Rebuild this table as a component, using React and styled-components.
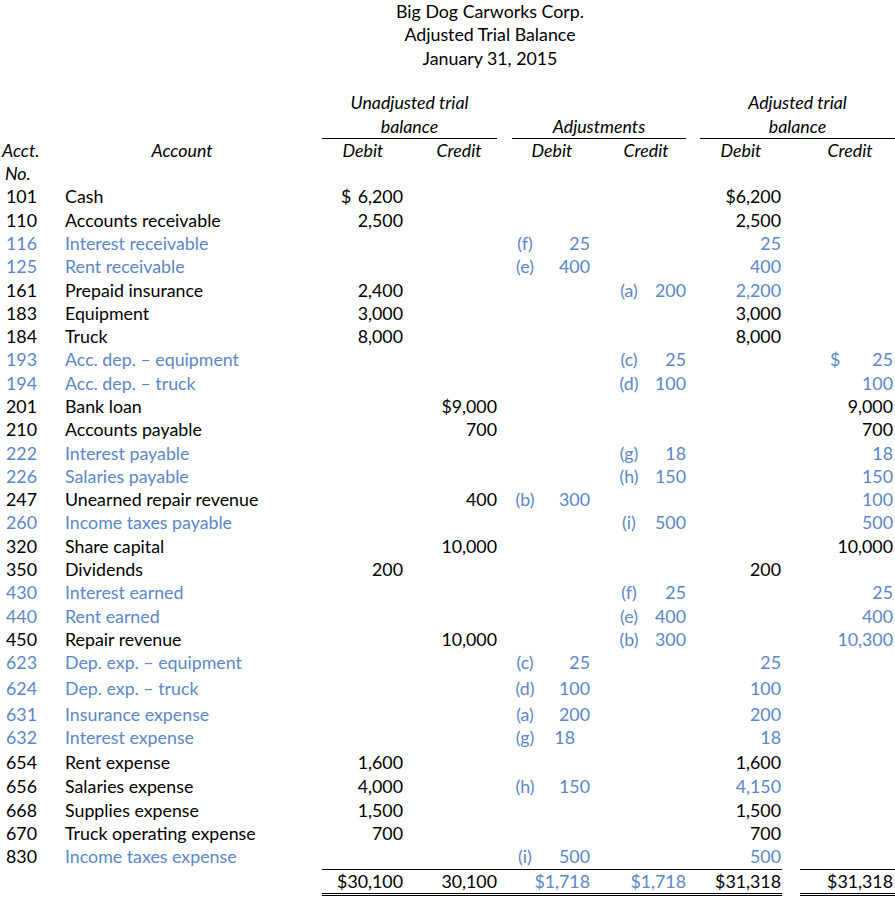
import React from "react";
import styled, { createGlobalStyle } from "styled-components";

// colours and grid columns shared by every row of the sheet
const BLUE = "#5b87c6";
const INK = "#000";
const COLS = "60px 262px 88px 87px 15px 87px 87px 14px 90px 105px";

const GlobalStyle = createGlobalStyle`
  html, body {
    margin: 0;
    padding: 0;
    background: #fff;
  }
  body {
    font-family: Lato, "Open Sans", sans-serif;
    font-size: 17.8px;
    line-height: 23.3px;
    color: ${INK};
  }
`;

const Sheet = styled.div`
  width: 895px;
  height: 897px;
  overflow: hidden;
`;

const Title = styled.header`
  padding-left: 85px;
  text-align: center;
`;

const TitleLine = styled.div`
  height: 23.3px;
`;

const GroupBar = styled.div`
  display: grid;
  grid-template-columns: ${COLS};
  margin-top: 21.45px;
`;

const Group = styled.div`
  grid-column: ${(p) => p.$col};
  min-height: 46.6px;
  display: flex;
  flex-direction: column;
  justify-content: flex-end;
  align-items: center;
  font-style: italic;
  border-bottom: 1px solid ${INK};
`;

const LabelRow = styled.div`
  display: grid;
  grid-template-columns: ${COLS};
  height: 46.4px;
  font-style: italic;
`;

const AcctHead = styled.div`
  grid-column: 1;
  display: flex;
  flex-direction: column;
`;

const AcctHeadLine = styled.span`
  padding-left: ${(p) => p.$pl}px;
  height: 23.2px;
`;

const HeadLabel = styled.div`
  grid-column: ${(p) => p.$col};
  text-align: center;
  padding-left: ${(p) => p.$pl || 0}px;
  padding-right: ${(p) => p.$pr || 0}px;
`;

const Row = styled.div`
  display: grid;
  grid-template-columns: ${COLS};
  height: ${(p) => p.$h}px;
  white-space: nowrap;
`;

const Num = styled.div`
  grid-column: 1;
  padding-left: 6px;
  color: ${(p) => (p.$blue ? BLUE : INK)};
`;

const Name = styled.div`
  grid-column: 2;
  padding-left: 5px;
  color: ${(p) => (p.$blue ? BLUE : INK)};
`;

const Amount = styled.div`
  grid-column: ${(p) => p.$col};
  display: flex;
  justify-content: ${(p) => (p.$split ? "space-between" : "flex-end")};
  padding-left: ${(p) => p.$pl || 0}px;
  padding-right: ${(p) => p.$pr || 0}px;
  color: ${(p) => (p.$blue ? BLUE : INK)};
`;

const Adj = styled.div`
  grid-column: ${(p) => p.$col};
  display: flex;
  padding-left: ${(p) => p.$pl}px;
  padding-right: ${(p) => p.$pr}px;
  color: ${BLUE};
`;

const Letter = styled.span`
  width: 26px;
  text-align: center;
`;

const AdjAmount = styled.span`
  flex: 1;
  text-align: right;
  padding-right: ${(p) => p.$shift || 0}px;
`;

const TotalRow = styled.div`
  display: grid;
  grid-template-columns: ${COLS};
  white-space: nowrap;
`;

const TotalCell = styled.div`
  grid-column: ${(p) => p.$col};
  height: 23.3px;
  border-top: 1px solid ${INK};
  border-bottom: 3px double ${INK};
  margin-left: ${(p) => p.$ml || 0}px;
  margin-right: ${(p) => p.$mr || 0}px;
  padding-right: ${(p) => p.$pr || 0}px;
  text-align: right;
  color: ${(p) => (p.$blue ? BLUE : INK)};
`;

const rows = [
  { no: "101", name: "Cash", ud: "$ 6,200", jd: "$6,200" },
  { no: "110", name: "Accounts receivable", ud: "2,500", jd: "2,500" },
  { no: "116", name: "Interest receivable", fresh: true, ad: ["(f)", "25"], jd: "25" },
  { no: "125", name: "Rent receivable", fresh: true, ad: ["(e)", "400"], jd: "400" },
  { no: "161", name: "Prepaid insurance", ud: "2,400", ac: ["(a)", "200"], jd: "2,200" },
  { no: "183", name: "Equipment", ud: "3,000", jd: "3,000" },
  { no: "184", name: "Truck", ud: "8,000", jd: "8,000" },
  { no: "193", name: "Acc. dep. – equipment", fresh: true, ac: ["(c)", "25"], jc: "$ 25" },
  { no: "194", name: "Acc. dep. – truck", fresh: true, ac: ["(d)", "100"], jc: "100" },
  { no: "201", name: "Bank loan", uc: "$9,000", jc: "9,000" },
  { no: "210", name: "Accounts payable", uc: "700", jc: "700" },
  { no: "222", name: "Interest payable", fresh: true, ac: ["(g)", "18"], jc: "18" },
  { no: "226", name: "Salaries payable", fresh: true, ac: ["(h)", "150"], jc: "150" },
  { no: "247", name: "Unearned repair revenue", uc: "400", ad: ["(b)", "300"], jc: "100" },
  { no: "260", name: "Income taxes payable", fresh: true, ac: ["(i)", "500"], jc: "500" },
  { no: "320", name: "Share capital", uc: "10,000", jc: "10,000" },
  { no: "350", name: "Dividends", ud: "200", jd: "200" },
  { no: "430", name: "Interest earned", fresh: true, ac: ["(f)", "25"], jc: "25" },
  { no: "440", name: "Rent earned", fresh: true, ac: ["(e)", "400"], jc: "400" },
  { no: "450", name: "Repair revenue", uc: "10,000", ac: ["(b)", "300"], jc: "10,300" },
  { no: "623", name: "Dep. exp. – equipment", fresh: true, ad: ["(c)", "25"], jd: "25", h: 26 },
  { no: "624", name: "Dep. exp. – truck", fresh: true, ad: ["(d)", "100"], jd: "100", h: 26 },
  { no: "631", name: "Insurance expense", fresh: true, ad: ["(a)", "200"], jd: "200", h: 23 },
  { no: "632", name: "Interest expense", fresh: true, ad: ["(g)", "18"], shift: 15, jd: "18", h: 25 },
  { no: "654", name: "Rent expense", ud: "1,600", jd: "1,600", h: 24 },
  { no: "656", name: "Salaries expense", ud: "4,000", ad: ["(h)", "150"], jd: "4,150" },
  { no: "668", name: "Supplies expense", ud: "1,500", jd: "1,500" },
  { no: "670", name: "Truck operating expense", ud: "700", jd: "700" },
  { no: "830", name: "Income taxes expense", blueName: true, ad: ["(i)", "500"], jd: "500", h: 24 },
];

// "$ 6,200" keeps the dollar sign apart from the figure, like the accounting format
const Money = ({ value, col, pl, pr, blue }) => {
  if (!value) return null;
  if (value.startsWith("$ ")) {
    return (
      <Amount $col={col} $pl={pl} $pr={pr} $blue={blue} $split>
        <span>$</span>
        <span>{value.slice(2)}</span>
      </Amount>
    );
  }
  return (
    <Amount $col={col} $pr={pr} $blue={blue}>
      {value}
    </Amount>
  );
};

const LedgerRow = ({ r }) => {
  const adjusted = Boolean(r.ad || r.ac);
  return (
    <Row $h={r.h || 23.3}>
      <Num $blue={r.fresh}>{r.no}</Num>
      <Name $blue={r.fresh || r.blueName}>{r.name}</Name>
      <Money value={r.ud} col={3} pl={19} pr={7} />
      <Money value={r.uc} col={4} />
      {r.ad && (
        <Adj $col={6} $pl={0} $pr={9}>
          <Letter>{r.ad[0]}</Letter>
          <AdjAmount $shift={r.shift}>{r.ad[1]}</AdjAmount>
        </Adj>
      )}
      {r.ac && (
        <Adj $col={7} $pl={17} $pr={0}>
          <Letter>{r.ac[0]}</Letter>
          <AdjAmount>{r.ac[1]}</AdjAmount>
        </Adj>
      )}
      <Money value={r.jd} col={9} pr={9} blue={adjusted} />
      <Money value={r.jc} col={10} pl={40} pr={2} blue={adjusted} />
    </Row>
  );
};

export default function App() {
  return (
    <Sheet>
      <GlobalStyle />
      <Title>
        <TitleLine>Big Dog Carworks Corp.</TitleLine>
        <TitleLine>Adjusted Trial Balance</TitleLine>
        <TitleLine>January 31, 2015</TitleLine>
      </Title>

      <GroupBar>
        <Group $col="3 / 5">
          <span>Unadjusted trial</span>
          <span>balance</span>
        </Group>
        <Group $col="6 / 8">
          <span>Adjustments</span>
        </Group>
        <Group $col="9 / 11">
          <span>Adjusted trial</span>
          <span>balance</span>
        </Group>
      </GroupBar>

      <LabelRow>
        <AcctHead>
          <AcctHeadLine $pl={2}>Acct.</AcctHeadLine>
          <AcctHeadLine $pl={5}>No.</AcctHeadLine>
        </AcctHead>
        <HeadLabel $col={2} $pr={18}>Account</HeadLabel>
        <HeadLabel $col={3} $pr={6}>Debit</HeadLabel>
        <HeadLabel $col={4} $pl={11}>Credit</HeadLabel>
        <HeadLabel $col={6} $pr={7}>Debit</HeadLabel>
        <HeadLabel $col={7} $pl={7}>Credit</HeadLabel>
        <HeadLabel $col={9} $pr={8}>Debit</HeadLabel>
        <HeadLabel $col={10} $pl={15}>Credit</HeadLabel>
      </LabelRow>

      {rows.map((r) => (
        <LedgerRow key={r.no} r={r} />
      ))}

      <TotalRow>
        <TotalCell $col={3} $pr={7}>$30,100</TotalCell>
        <TotalCell $col={4}>30,100</TotalCell>
        <TotalCell $col={5} />
        <TotalCell $col={6} $pr={9} $blue>$1,718</TotalCell>
        <TotalCell $col={7} $blue>$1,718</TotalCell>
        <TotalCell $col={8} />
        <TotalCell $col={9} $mr={8} $pr={1}>$31,318</TotalCell>
        <TotalCell $col={10} $ml={10} $pr={2}>$31,318</TotalCell>
      </TotalRow>
    </Sheet>
  );
}
